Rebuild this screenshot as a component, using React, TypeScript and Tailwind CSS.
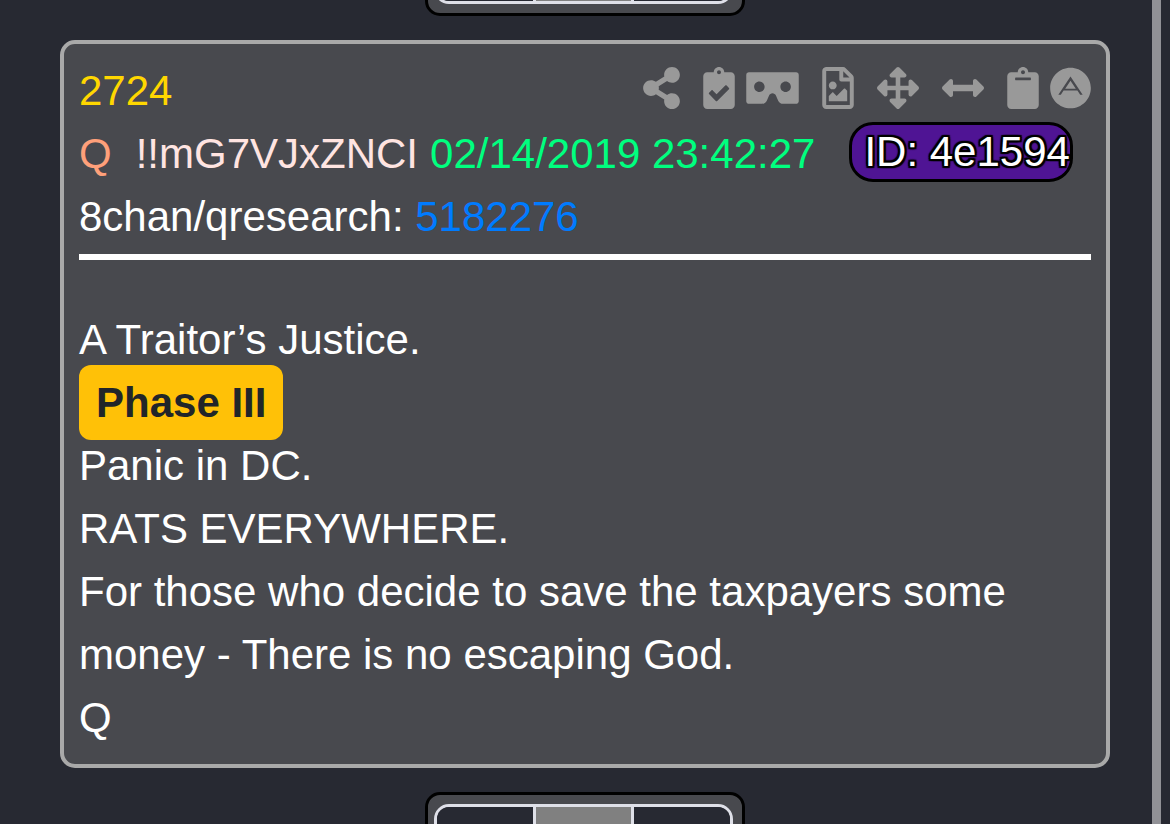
import React from 'react';
import {
  FaAdn,
  FaArrowsAlt,
  FaArrowsAltH,
  FaClipboard,
  FaClipboardCheck,
  FaRegFileImage,
  FaShareAlt,
  FaVrCardboard,
} from 'react-icons/fa';
import type { IconType } from 'react-icons';

interface Action {
  label: string;
  icon: IconType;
  width: string;
}

interface Post {
  number: number;
  name: string;
  trip: string;
  date: string;
  userId: string;
  board: string;
  link: string;
}

const post: Post = {
  number: 2724,
  name: 'Q',
  trip: '!!mG7VJxZNCI',
  date: '02/14/2019 23:42:27',
  userId: '4e1594',
  board: '8chan/qresearch',
  link: '5182276',
};

// Actions in the same group sit closer together
const actionGroups: Action[][] = [
  [{ label: 'Share', icon: FaShareAlt, width: 'w-[37px]' }],
  [
    { label: 'Copy checked', icon: FaClipboardCheck, width: 'w-8' },
    { label: 'View', icon: FaVrCardboard, width: 'w-[53px]' },
  ],
  [{ label: 'Image', icon: FaRegFileImage, width: 'w-8' }],
  [{ label: 'Expand', icon: FaArrowsAlt, width: 'w-[42px]' }],
  [{ label: 'Widen', icon: FaArrowsAltH, width: 'w-[42px]' }],
  [
    { label: 'Copy', icon: FaClipboard, width: 'w-8' },
    { label: 'Answers', icon: FaAdn, width: 'w-[41px]' },
  ],
];

const Pager = () => (
  <nav className="w-80 shrink-0 rounded-[15px] border-3 border-black bg-[#48494e] py-[9px] pr-[9px] pl-1.5">
    <div className="flex h-20 divide-x-3 divide-[#dfe0e8] overflow-hidden rounded-[15px] border-3 border-[#dfe0e8]">
      <button type="button" aria-label="Previous" className="flex-1 bg-[#272932]" />
      <button type="button" aria-label="Current" className="flex-1 bg-[#808080]" />
      <button type="button" aria-label="Next" className="flex-1 bg-[#272932]" />
    </div>
  </nav>
);

const Actions = () => (
  <div className="flex gap-[23px] pt-2 text-[#999999]">
    {actionGroups.map((group, index) => (
      <div key={index} className="flex gap-[11px]">
        {group.map(({ label, icon: Icon, width }) => (
          <button key={label} type="button" aria-label={label}>
            <Icon className={`h-[42px] ${width}`} />
          </button>
        ))}
      </div>
    ))}
  </div>
);

const PostHeader = () => (
  <header>
    <div className="flex items-start justify-between">
      <span className="text-[#ffd700]">{post.number}</span>
      <Actions />
    </div>
    <div className="flex items-start whitespace-nowrap">
      <span className="mr-6 text-[#ffa07a]">{post.name}</span>
      <span className="mr-3 text-[#ffe4e1]">{post.trip}</span>
      <time className="mr-[34px] text-[#00ff7f]">{post.date}</time>
      <span className="rounded-[24px] border-3 border-black bg-[#4f1494] pl-3 leading-[54px] [text-shadow:2px_0_1px_#000,-2px_0_1px_#000,0_2px_1px_#000,0_-2px_1px_#000,2px_2px_1px_#000,-2px_2px_1px_#000,2px_-2px_1px_#000,-2px_-2px_1px_#000]">
        ID: {post.userId}
      </span>
    </div>
    <div>
      {post.board}:{' '}
      <a href="#" className="text-[#007bff]">
        {post.link}
      </a>
    </div>
  </header>
);

const App = () => {
  return (
    <div className="flex h-screen overflow-hidden bg-[#272932] font-['Liberation_Sans',Arial,sans-serif] text-[42px] leading-[63px] text-white">
      <main className="flex flex-1 flex-col items-center pr-[42px] pl-[60px]">
        <div className="flex h-4 shrink-0 flex-col justify-end overflow-hidden">
          <Pager />
        </div>

        <article className="my-6 w-full shrink-0 rounded-[15px] border-4 border-[#a9a9a9] bg-[#48494e] p-[15px]">
          <PostHeader />
          <hr className="mt-1.5 mb-12 border-t-6 border-white" />
          <p>A Traitor’s Justice.</p>
          <p>
            <mark className="rounded-xl bg-[#ffc107] px-[17px] py-[14px] font-bold text-[#212529]">
              Phase III
            </mark>
          </p>
          <p>Panic in DC.</p>
          <p>RATS EVERYWHERE.</p>
          <p>For those who decide to save the taxpayers some money - There is no escaping God.</p>
          <p>Q</p>
        </article>

        <Pager />
      </main>
      <div className="w-[9px] bg-[#919196]" />
      <div className="w-[9px] bg-[#272932]" />
    </div>
  );
};

export default App;
